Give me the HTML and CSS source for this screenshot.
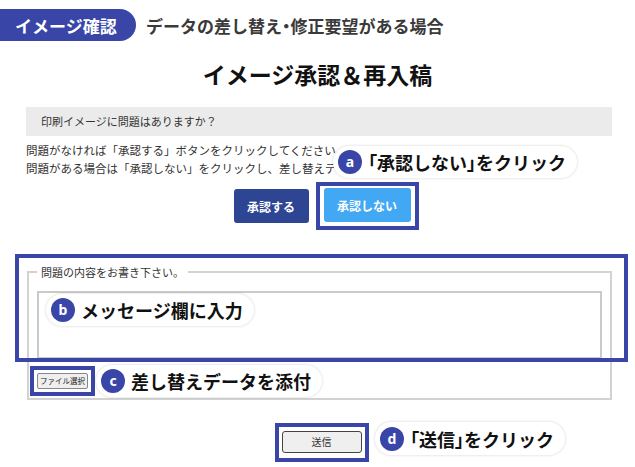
FILE: index.html
```html
<!DOCTYPE html>
<html lang="ja">
<head>
<meta charset="utf-8">
<link rel="stylesheet" href="styles.css">
</head>
<body>
<div class="page">
  <header class="header">
    <div class="pill">イメージ確認</div>
    <div class="header-title">データの差し替え<span class="narrow">・</span>修正要望がある場合</div>
  </header>
  <h1 class="title">イメージ承認＆再入稿</h1>
  <div class="content">
    <div class="question">印刷イメージに問題はありますか？</div>
    <p class="desc">問題がなければ「承認する」ボタンをクリックしてください。<br>問題がある場合は「承認しない」をクリックし、差し替えデータを添付してください。</p>
    <div class="choice">
      <button class="btn btn-yes">承認する</button>
      <span class="hl hl-no"><button class="btn btn-no">承認しない</button></span>
    </div>
    <fieldset class="form">
      <legend>問題の内容をお書き下さい。</legend>
      <textarea class="message"></textarea>
      <div class="file-row"><span class="hl hl-file"><button class="file-btn">ファイル選択</button></span></div>
    </fieldset>
    <div class="send-row"><span class="hl hl-send"><button class="send-btn">送信</button></span></div>
  </div>

  <div class="hl-box"></div>
  <div class="callout callout-a"><span class="dot">a</span><span class="callout-text"><span class="narrow">「</span>承認しない<span class="narrow">」</span>をクリック</span></div>
  <div class="callout callout-b"><span class="dot">b</span><span class="callout-text">メッセージ欄に入力</span></div>
  <div class="callout callout-c"><span class="dot">c</span><span class="callout-text">差し替えデータを添付</span></div>
  <div class="callout callout-d"><span class="dot">d</span><span class="callout-text"><span class="narrow">「</span>送信<span class="narrow">」</span>をクリック</span></div>
</div>
</body>
</html>
```
FILE: styles.css
```css
* { box-sizing: border-box; }
html, body { margin: 0; padding: 0; background: #fff; }
body {
  font-family: "Noto Sans CJK JP", "Noto Sans", sans-serif;
  color: #222;
  width: 635px;
  height: 467px;
  overflow: hidden;
}
.page { position: relative; width: 635px; height: 467px; }
.narrow { font-feature-settings: "palt"; }

.header { display: flex; align-items: center; padding-top: 9px; }
.pill {
  height: 32px;
  width: 136px;
  padding-left: 15px;
  display: flex;
  align-items: center;
  background: #3946a8;
  color: #fff;
  font-weight: 700;
  font-size: 17px;
  border-radius: 0 16px 16px 0;
}
.header-title {
  margin-left: 10px;
  font-size: 17px;
  font-weight: 700;
  color: #3a3a3a;
}
.title {
  margin: 19px 0 0;
  text-align: center;
  font-size: 23px;
  line-height: 28px;
  font-weight: 700;
  color: #111;
}
.content { padding: 0 23px 0 26px; }
.question {
  margin-top: 19px;
  height: 29px;
  background: #ebebeb;
  padding-left: 15px;
  font-size: 11px;
  line-height: 29px;
  color: #333;
}
.desc {
  margin: 5px 0 0;
  font-size: 11.5px;
  line-height: 18px;
  color: #333;
  white-space: nowrap;
}
.choice {
  display: flex;
  justify-content: center;
  align-items: center;
  gap: 7px;
  margin-top: 5px;
  padding-left: 14px;
}
.hl { display: inline-block; border: 4px solid #3946a8; }
.hl-no { padding: 2px 4px 4px 4px; }
.btn {
  display: block;
  height: 34px;
  border: 0;
  border-radius: 3px;
  color: #fff;
  font-family: inherit;
  font-weight: 700;
  font-size: 12px;
}
.btn-yes { width: 75px; background: #2e4593; }
.btn-no { width: 87px; background: #42a8f4; }

.form {
  margin: 34px 0 0 1px;
  width: 585px;
  border: 2px solid #d2d2d2;
  padding: 0 8px 2px 8px;
}
.form legend {
  margin-left: 0;
  padding: 0 4px;
  font-size: 11px;
  line-height: 16px;
  color: #333;
}
.message {
  display: block;
  margin-top: 11px;
  width: 565px;
  height: 68px;
  border: 2px solid #cacaca;
  resize: none;
}
.file-row { margin: 6px 0 0 -7px; }
.hl-file { padding: 3px; }
.file-btn {
  display: block;
  width: 51px;
  height: 16px;
  padding: 0;
  border: 1px solid #888;
  border-radius: 2px;
  background: #efefef;
  font-family: inherit;
  font-size: 7.5px;
  color: #222;
}

.send-row { display: flex; justify-content: center; margin-top: 23px; padding-left: 5px; }
.hl-send { padding: 4px 3px 5px 3px; }
.send-btn {
  display: block;
  width: 80px;
  height: 22px;
  padding: 0;
  border: 1.5px solid #444;
  border-radius: 3px;
  background: #efefef;
  font-family: inherit;
  font-size: 10px;
  color: #333;
}

.hl-box {
  position: absolute;
  left: 15px;
  top: 254px;
  width: 613px;
  height: 108px;
  border: 4px solid #3946a8;
}
.callout {
  position: absolute;
  height: 32px;
  display: inline-flex;
  align-items: center;
  padding: 0 11px 0 5px;
  background: #fff;
  border-radius: 16px;
  box-shadow: 0 0 3px rgba(0, 0, 0, 0.18);
  white-space: nowrap;
}
.dot {
  width: 24px;
  height: 24px;
  border-radius: 50%;
  background: #3946a8;
  color: #fff;
  font-family: "Noto Sans", sans-serif;
  font-weight: 700;
  font-size: 14px;
  line-height: 24px;
  text-align: center;
}
.callout-text {
  margin-left: 6px;
  font-size: 18px;
  font-weight: 700;
  color: #111;
}
.callout-a { left: 333px; top: 146px; }
.callout-b { left: 46px; top: 294px; }
.callout-c { left: 96px; top: 365px; }
.callout-d { left: 375px; top: 422px; height: 33px; }
```
